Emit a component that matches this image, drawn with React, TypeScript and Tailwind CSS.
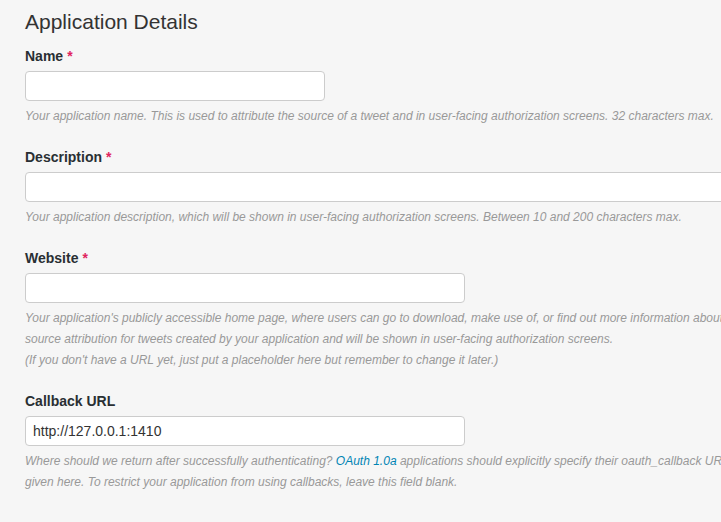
const font = { fontFamily: '"Helvetica Neue", "Liberation Sans", Arial, sans-serif' };

function Label({ text, required }: { text: string; required?: boolean }) {
    return (
        <div className="h-5 text-[14px] font-bold leading-5 text-[#292f33]">
            {text}
            {required && <span className="ml-1 text-[#e0245e]">*</span>}
        </div>
    );
}

function Field({ width, value }: { width: string; value?: string }) {
    return (
        <div
            className={`mt-[5px] h-[30px] ${width} shrink-0 rounded-[4px] border border-[#cccccc] bg-white px-[7px] text-[14px] leading-[28px] text-[#333]`}
        >
            {value}
        </div>
    );
}

function Help({ lines }: { lines: React.ReactNode[] }) {
    return (
        <div className="mt-[5px] text-[12px] italic leading-[21px] text-[#999]">
            {lines.map((l, i) => (
                <div key={i} className="whitespace-nowrap">
                    {l}
                </div>
            ))}
        </div>
    );
}

export default function App() {
    return (
        <div className="h-[522px] w-[721px] overflow-hidden bg-[#f6f6f6] pl-[25px]" style={font}>
            <h1 className="pt-[9px] text-[21px] font-normal leading-[26px] text-[#333]">Application Details</h1>

            <div className="mt-[11px] flex flex-col">
                <Label text="Name" required />
                <Field width="w-[300px]" />
                <Help
                    lines={[
                        'Your application name. This is used to attribute the source of a tweet and in user-facing authorization screens. 32 characters max.',
                    ]}
                />
            </div>

            <div className="mt-[20px] flex flex-col">
                <Label text="Description" required />
                <Field width="w-[720px]" />
                <Help
                    lines={[
                        'Your application description, which will be shown in user-facing authorization screens. Between 10 and 200 characters max.',
                    ]}
                />
            </div>

            <div className="mt-[20px] flex flex-col">
                <Label text="Website" required />
                <Field width="w-[440px]" />
                <Help
                    lines={[
                        "Your application's publicly accessible home page, where users can go to download, make use of, or find out more information about your application. This fully-qualified URL is used in the",
                        'source attribution for tweets created by your application and will be shown in user-facing authorization screens.',
                        "(If you don't have a URL yet, just put a placeholder here but remember to change it later.)",
                    ]}
                />
            </div>

            <div className="mt-[20px] flex flex-col">
                <Label text="Callback URL" />
                <Field width="w-[440px]" value="http://127.0.0.1:1410" />
                <Help
                    lines={[
                        <>
                            Where should we return after successfully authenticating?{' '}
                            <span className="text-[#0084b4]">OAuth 1.0a</span> applications should explicitly specify
                            their oauth_callback URL on the request token step, regardless of the value
                        </>,
                        'given here. To restrict your application from using callbacks, leave this field blank.',
                    ]}
                />
            </div>
        </div>
    );
}
